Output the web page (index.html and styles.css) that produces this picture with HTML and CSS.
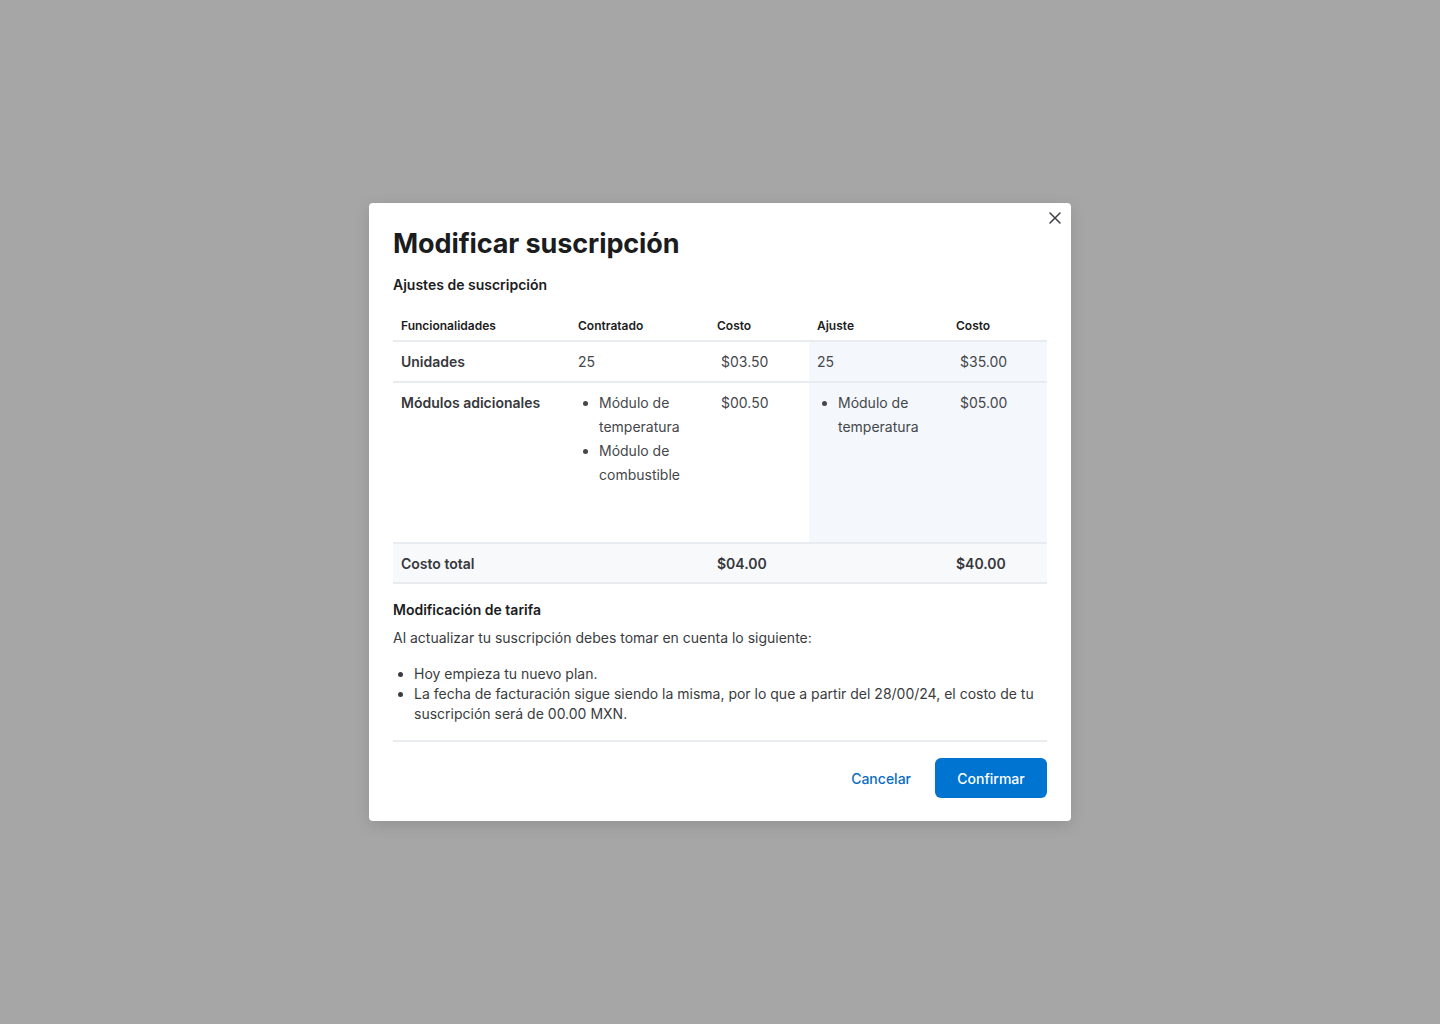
FILE: index.html
```html
<!DOCTYPE html>
<html lang="es">
<head>
<meta charset="utf-8">
<title>Modificar suscripción</title>
<link rel="stylesheet" href="styles.css">
</head>
<body>
<div class="overlay">
  <div class="modal">
    <button class="close" aria-label="Cerrar">
      <svg width="12" height="12" viewBox="0 0 12 12"><path d="M1 1L11 11M11 1L1 11" stroke="#3b3f45" stroke-width="1.5" stroke-linecap="round"/></svg>
    </button>
    <h1 class="title">Modificar suscripción</h1>
    <h2 class="subtitle">Ajustes de suscripción</h2>
    <table class="tbl">
      <colgroup>
        <col class="c1"><col class="c2"><col class="c3"><col class="c4"><col class="c5">
      </colgroup>
      <thead>
        <tr><th>Funcionalidades</th><th>Contratado</th><th>Costo</th><th>Ajuste</th><th>Costo</th></tr>
      </thead>
      <tbody>
        <tr class="row">
          <td class="feat">Unidades</td>
          <td>25</td>
          <td class="cost">$03.50</td>
          <td class="hl">25</td>
          <td class="hl cost">$35.00</td>
        </tr>
        <tr class="row tall">
          <td class="feat">Módulos adicionales</td>
          <td><ul class="mods"><li>Módulo de temperatura</li><li>Módulo de combustible</li></ul></td>
          <td class="cost">$00.50</td>
          <td class="hl"><ul class="mods"><li>Módulo de temperatura</li></ul></td>
          <td class="hl cost">$05.00</td>
        </tr>
        <tr class="row total">
          <td class="feat">Costo total</td>
          <td></td>
          <td class="strong">$04.00</td>
          <td></td>
          <td class="strong">$40.00</td>
        </tr>
      </tbody>
    </table>
    <h2 class="section">Modificación de tarifa</h2>
    <p class="text">Al actualizar tu suscripción debes tomar en cuenta lo siguiente:</p>
    <ul class="notes">
      <li>Hoy empieza tu nuevo plan.</li>
      <li>La fecha de facturación sigue siendo la misma, por lo que a partir del 28/00/24, el costo de tu suscripción será de 00.00 MXN.</li>
    </ul>
    <div class="footer">
      <button class="btn-link">Cancelar</button>
      <button class="btn-primary">Confirmar</button>
    </div>
  </div>
</div>
</body>
</html>
```

FILE: styles.css
```css
* { box-sizing: border-box; }
html, body { margin: 0; padding: 0; }
body {
  font-family: Inter, "Noto Sans", sans-serif;
  background: #a6a6a6;
  width: 1440px;
  height: 1024px;
}
.overlay {
  display: flex;
  justify-content: center;
  padding-top: 203px;
}
.modal {
  position: relative;
  width: 702px;
  background: #fff;
  border-radius: 4px;
  padding: 25px 24px 23px;
  box-shadow: 0 4px 16px rgba(0,0,0,0.12);
}
.close {
  position: absolute;
  top: 5px;
  right: 6px;
  width: 20px;
  height: 20px;
  border: 0;
  background: none;
  padding: 0;
  display: flex;
  align-items: center;
  justify-content: center;
  cursor: pointer;
}
.title {
  margin: 0;
  font-size: 27px;
  line-height: 32px;
  font-weight: 700;
  color: #1b1c1e;
  letter-spacing: -0.1px;
}
.subtitle {
  margin: 15px 0 0;
  font-size: 14px;
  line-height: 20px;
  font-weight: 600;
  color: #1b1c1e;
}
.tbl {
  margin-top: 14px;
  width: 654px;
  border-collapse: collapse;
  table-layout: fixed;
}
.c1 { width: 177px; }
.c2 { width: 139px; }
.c3 { width: 100px; }
.c4 { width: 139px; }
.c5 { width: 99px; }
.tbl th {
  text-align: left;
  font-size: 12px;
  line-height: 16px;
  font-weight: 600;
  color: #1b1c1e;
  padding: 9px 8px 6px;
  height: 32px;
  border-bottom: 2px solid #e8ebf0;
}
.tbl td {
  font-size: 14px;
  line-height: 24px;
  color: #45474b;
  padding: 8px 8px 7px;
  vertical-align: top;
  border-bottom: 2px solid #e8ebf0;
}
.row { height: 41px; }
.tall { height: 161px; }
.tbl .total td { padding: 8px 8px 6px; }
.total { height: 40px; }
.tbl td.feat { font-weight: 600; color: #36383c; }
.tbl td.cost { padding-left: 12px; }
.tbl td.hl { background: #f4f7fc; }
.total td { background: #f8f9fb; }
.tbl td.strong { font-weight: 600; color: #36383c; }
.mods {
  margin: 0;
  padding-left: 21px;
}
.mods li { line-height: 24px; }
.section {
  margin: 16px 0 0;
  font-size: 14px;
  line-height: 20px;
  font-weight: 600;
  color: #1b1c1e;
}
.text {
  margin: 8px 0 0;
  font-size: 14px;
  line-height: 20px;
  color: #3a3c40;
}
.notes {
  margin: 16px 0 0;
  padding-left: 21px;
  font-size: 14px;
  line-height: 20px;
  color: #3a3c40;
  padding-bottom: 16px;
  border-bottom: 2px solid #e8ebf0;
}
.footer {
  display: flex;
  justify-content: flex-end;
  align-items: center;
  gap: 8px;
  margin-top: 16px;
}
.btn-link {
  border: 0;
  background: none;
  font-family: inherit;
  font-size: 14px;
  font-weight: 500;
  color: #0a6dc2;
  padding: 0 16px;
  height: 40px;
  cursor: pointer;
}
.btn-primary {
  border: 0;
  background: #0074d1;
  color: #fff;
  font-family: inherit;
  font-size: 14px;
  font-weight: 500;
  width: 112px;
  height: 40px;
  border-radius: 6px;
  cursor: pointer;
}
```
